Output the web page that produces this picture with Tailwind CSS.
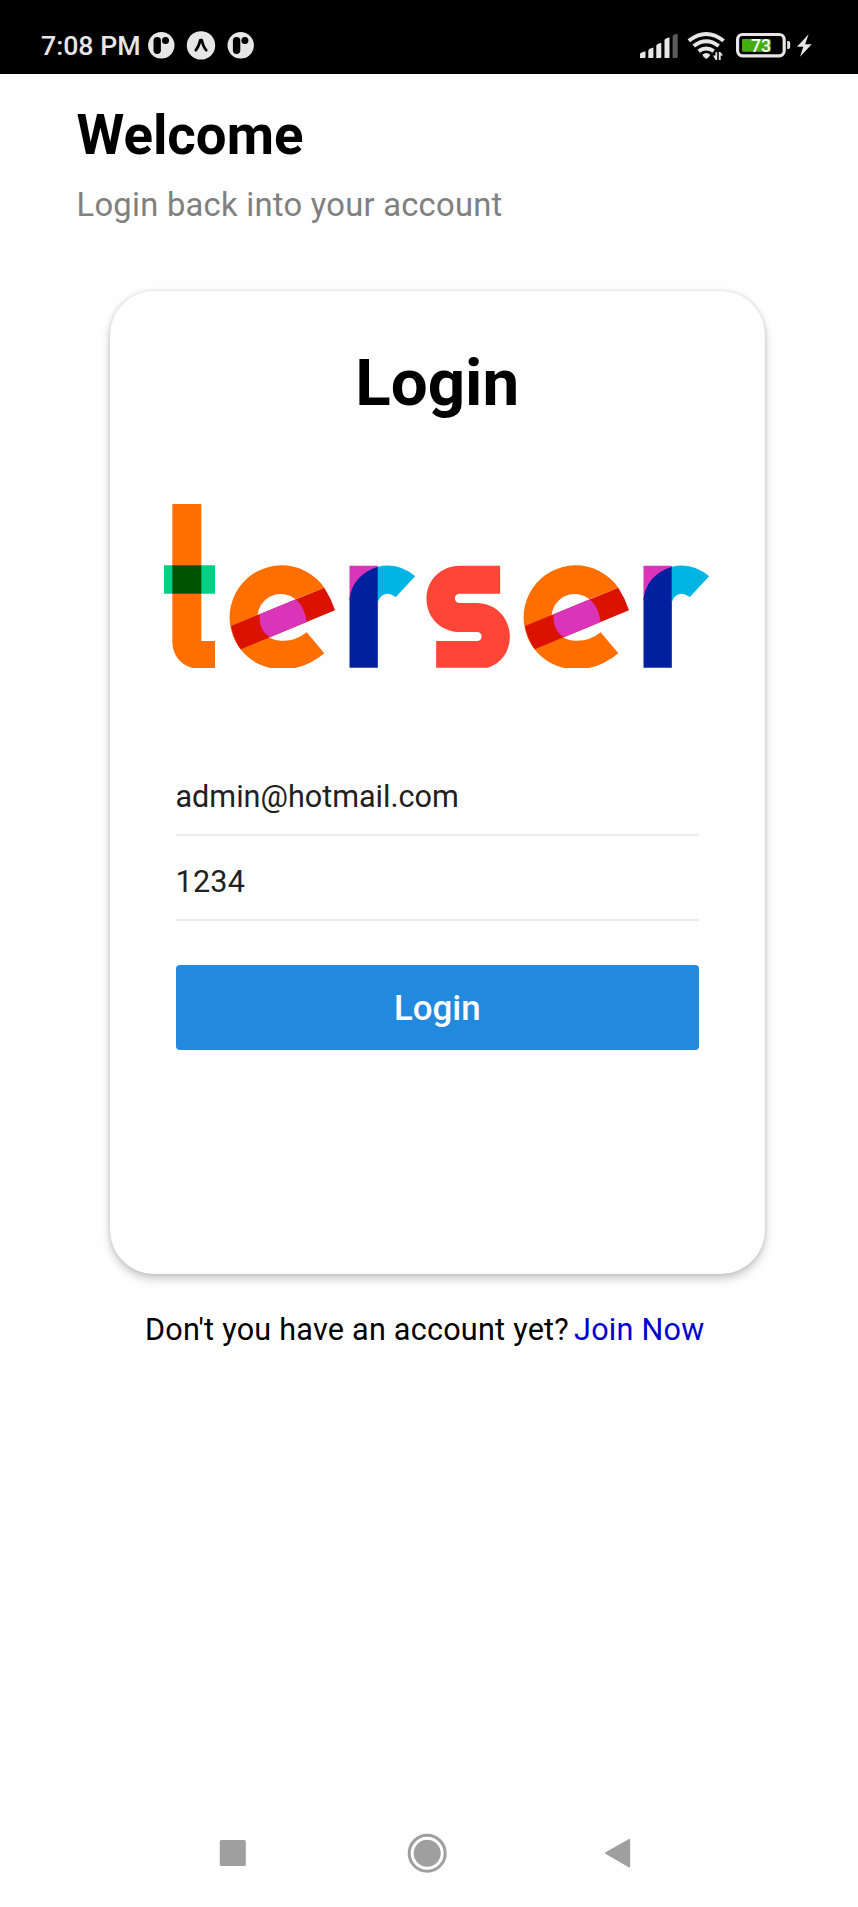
<!DOCTYPE html>
<html lang="en">
<head>
<meta charset="utf-8">
<title>Login</title>
<script src="https://cdn.jsdelivr.net/npm/@tailwindcss/browser@4"></script>
</head>
<body class="bg-[#fefefe]">
<div class="flex h-[1907px] w-[858px] flex-col overflow-hidden bg-[#fefefe] font-[Roboto,sans-serif] text-black">
  <header class="flex h-[74px] shrink-0 items-start justify-between bg-black pt-[30px] pr-[46px] pl-[41px] text-[#e6e6e6]">
    <div class="flex">
      <span class="mt-[3px] w-[107px] text-[26.7px] leading-none font-medium whitespace-nowrap">7:08 PM</span>
      <svg class="h-8 w-[112px]" viewBox="148 30 112 32">
        <g id="r-badge"><circle cx="161.3" cy="45.3" r="13.2" fill="#e6e6e6"/><rect x="153.5" y="37" width="7.4" height="17" rx="3.7"/><circle cx="165.5" cy="40.6" r="3.5"/></g>
        <circle cx="201" cy="45.4" r="14.2" fill="#e6e6e6"/>
        <path d="M195.8 50.2Q198.6 47 200.3 40.2H201.8Q203.4 47 206.2 50.2" fill="none" stroke="#000" stroke-width="2.8" stroke-linecap="round" stroke-linejoin="round"/>
        <use href="#r-badge" x="79.4"/>
      </svg>
    </div>
    <svg class="h-8 w-[176px]" viewBox="636 30 176 32" fill="#e6e6e6">
      <path d="M640 58v-3.5q0-1.5 1.5-2l4-1.2V57q0 1-1 1zM648.3 58v-7q0-1.5 1.5-2.2l3.6-1.3V57q0 1-1 1zM656.3 58V46q0-1.5 1.5-2l3.5-1.3V57q0 1-1 1zM664.5 58V40.5q0-1.5 1.5-2l3.5-1.2V57q0 1-1 1z"/>
      <path d="M672.6 58V36.5q0-1.3 1.5-1.8l3.6-1.2V57q0 1-1 1z" fill="#5b5b5b"/>
      <g fill="none" stroke="#e6e6e6" stroke-width="3.9"><path d="M688.8 40.8Q706.2 27 723.6 40.8M693.7 46Q706.2 36.5 718.7 46M698.6 51.2Q706.2 45.8 713.8 51.2"/></g>
      <path d="M702.3 54.7Q706.3 51.5 710.3 54.7Q709 57.7 706.3 59Q703.6 57.7 702.3 54.7Z"/>
      <path d="M713 55.5h2.4v-3.3h1.8V60h-1.6zM718.8 52h1.5l2.8 3.6h-2.4V60h-1.9z"/>
      <rect x="737.6" y="34.5" width="46.6" height="21.3" rx="5" fill="none" stroke="#e6e6e6" stroke-width="3.2"/>
      <rect x="742" y="39" width="28.7" height="12.7" rx="1.5" fill="#43ad12"/>
      <path d="M787.2 41h1q2 0 2 2v4q0 2-2 2h-1z"/>
      <text x="751" y="52.2" font-size="17.5" font-weight="500" fill="#fff">73</text>
      <path d="M808.6 34.3L797 46.8H803.3L800 56.8L811.7 44.2H805.2Z"/>
    </svg>
  </header>

  <section class="flex h-[217px] shrink-0 flex-col pt-[34px] pl-[76.5px] leading-none">
    <h1 class="text-[54.6px] leading-none font-bold">Welcome</h1>
    <p class="mt-[26px] text-[32.76px] leading-none tracking-[0.25px] text-[#808080]">Login back into your account</p>
  </section>

  <main class="ml-[109.5px] flex h-[983px] w-[655.5px] shrink-0 flex-col rounded-[44px] bg-[#fefefe] px-[66px] pt-[58.5px] shadow-[0_5px_10px_rgba(0,0,0,0.2),0_0_4px_rgba(0,0,0,0.14)]">
    <h2 class="text-center text-[65.5px] leading-none font-bold">Login</h2>
    <svg class="-mx-[11.5px] mt-[89px] h-[164px] w-[546px] shrink-0" viewBox="164 504 546 164" role="img" aria-label="terser">
      <g transform="translate(150 490) scale(.33333)">
        <path d="M67 42H154V453H195V534H128C92 524 67 495 67 455Z" fill="#ff6f00"/>
        <path d="M42 226H195V311H42Z" fill="#00d084"/><path d="M67 226H154V311H67Z" fill="#005400"/>
        <g id="logo-e">
          <path d="M523 293A156 156 0 1 0 360 534H435Q483 524 523 490L470 427Q435 455 393 452A70 70 0 1 1 437 328Z" fill="#ff6f00"/>
          <path d="M243 408L523 293Q544 326 555 361L272 478Q250 447 243 408Z" fill="#db1200"/>
          <path d="M329 373L437 328Q464 351 470 396L360 442Q325 420 329 373Z" fill="#da35b8"/>
        </g>
        <use href="#logo-e" x="882"/>
      </g>
      <g transform="translate(329.5 540) scale(.33333)">
        <g id="logo-r">
          <path d="M60 77H145V180H60Z" fill="#da35b8"/>
          <path d="M145 80V383H60V175Q71 104 145 80Z" fill="#0020a0"/>
          <path d="M145 80Q207 65 257 109L199 171Q183 160 171 161Q151 164 145 187Z" fill="#00b4e4"/>
        </g>
        <use href="#logo-r" x="882"/>
        <path d="M512 77V161H390a14 14 0 0 0 0 28H440C500 189 541 235 541 290C541 335 515 370 475 383H320V303H443A13.5 13.5 0 0 0 443 276H385C330 272 291 230 291 176C291 120 335 77 390 77Z" fill="#ff4438"/>
      </g>
    </svg>
    <form class="mt-[82.5px] flex flex-col">
      <div class="h-[85px] border-b-2 border-[#ebebeb] pt-[31px] text-[30.57px] leading-none text-[#212121]">admin@hotmail.com</div>
      <div class="h-[85px] border-b-2 border-[#ebebeb] pt-[31px] text-[30.57px] leading-none tracking-[0.2px] text-[#212121]">1234</div>
      <button type="button" class="mt-[44px] h-[85.5px] rounded-[4px] bg-[#2289dc] pt-[5px] text-[34.9px] leading-none font-medium text-white">Login</button>
    </form>
  </main>

  <p class="mt-[41px] flex gap-[5px] pl-[145px] text-[30.57px] leading-none tracking-[0.24px] whitespace-nowrap">
    <span>Don't you have an account yet?</span><a class="text-[#0000cd]">Join Now</a>
  </p>

  <nav class="mt-auto mb-[33px] pl-[219px]">
    <svg class="h-[42px] w-[413px]" viewBox="219 1832 413 42" fill="#9f9f9f">
      <rect x="219.8" y="1840" width="26" height="26" rx="1.5"/>
      <circle cx="427.2" cy="1853.3" r="13.5"/><circle cx="427.2" cy="1853.3" r="18" fill="none" stroke="#9f9f9f" stroke-width="3"/>
      <path d="M605.8 1853L629.4 1839.6V1866.8Z" stroke="#9f9f9f" stroke-width="1.5" stroke-linejoin="round"/>
    </svg>
  </nav>
</div>
</body>
</html>
